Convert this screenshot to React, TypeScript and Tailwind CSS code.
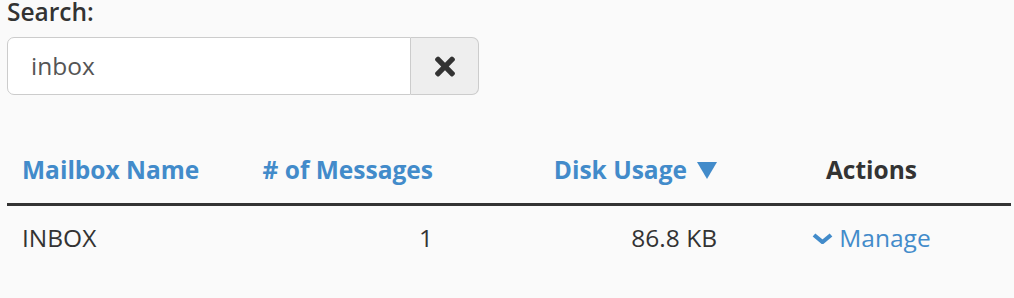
import { FaTimes } from "react-icons/fa"

const rows = [{ name: "INBOX", messages: 1, usage: "86.8 KB" }]

function SortDown() {
  return (
    <svg viewBox="0 0 20 17" className="ml-[10px] h-[17px] w-[20px] fill-[#428bca]">
      <polygon points="0,0 20,0 10,17" />
    </svg>
  )
}

function Chevron() {
  return (
    <svg viewBox="0 0 21 11" className="mr-[6px] h-[11px] w-[21px]">
      <polyline points="2,2 10.5,9 19,2" fill="none" stroke="#428bca" strokeWidth="4.2" />
    </svg>
  )
}

export default function App() {
  return (
    <div className="h-[298px] w-[1014px] bg-[#fafafa] pl-[7px] font-['Open_Sans',sans-serif] text-[24.5px] text-[#333]">
      <label className="block font-semibold leading-[24px]">Search:</label>
      <div className="mt-[13px] flex h-[58px] w-[472px]">
        <input
          defaultValue="inbox"
          className="min-w-0 flex-1 rounded-l-[7px] border border-[#ccc] bg-white pl-[23px] text-[24.5px] text-[#555] outline-none"
        />
        <button className="flex w-[68px] items-center justify-center rounded-r-[7px] border border-l-0 border-[#ccc] bg-[#eee] text-[#333]">
          <FaTimes className="h-[29px] w-[20px]" />
        </button>
      </div>

      <div className="mt-[44px] w-[1004px]">
        <div className="grid grid-cols-[233px_208px_284px_279px] border-b-[3px] border-[#333] font-bold leading-[34px]">
          <div className="pb-[16px] pl-[15px] pt-[14px] text-[#428bca]">Mailbox Name</div>
          <div className="pb-[16px] pr-[15px] pt-[14px] text-right text-[#428bca]"># of Messages</div>
          <div className="flex items-center justify-end pb-[16px] pr-[15px] pt-[14px] text-[#428bca]">
            Disk Usage
            <SortDown />
          </div>
          <div className="pb-[16px] pt-[14px] text-center">Actions</div>
        </div>
        {rows.map((row) => (
          <div key={row.name} className="grid grid-cols-[233px_208px_284px_279px] leading-[34px]">
            <div className="pl-[15px] pt-[15px]">{row.name}</div>
            <div className="pr-[15px] pt-[15px] text-right">{row.messages}</div>
            <div className="pr-[15px] pt-[15px] text-right">{row.usage}</div>
            <div className="flex items-center justify-center pt-[15px] text-[#428bca]">
              <Chevron />
              Manage
            </div>
          </div>
        ))}
      </div>
    </div>
  )
}
